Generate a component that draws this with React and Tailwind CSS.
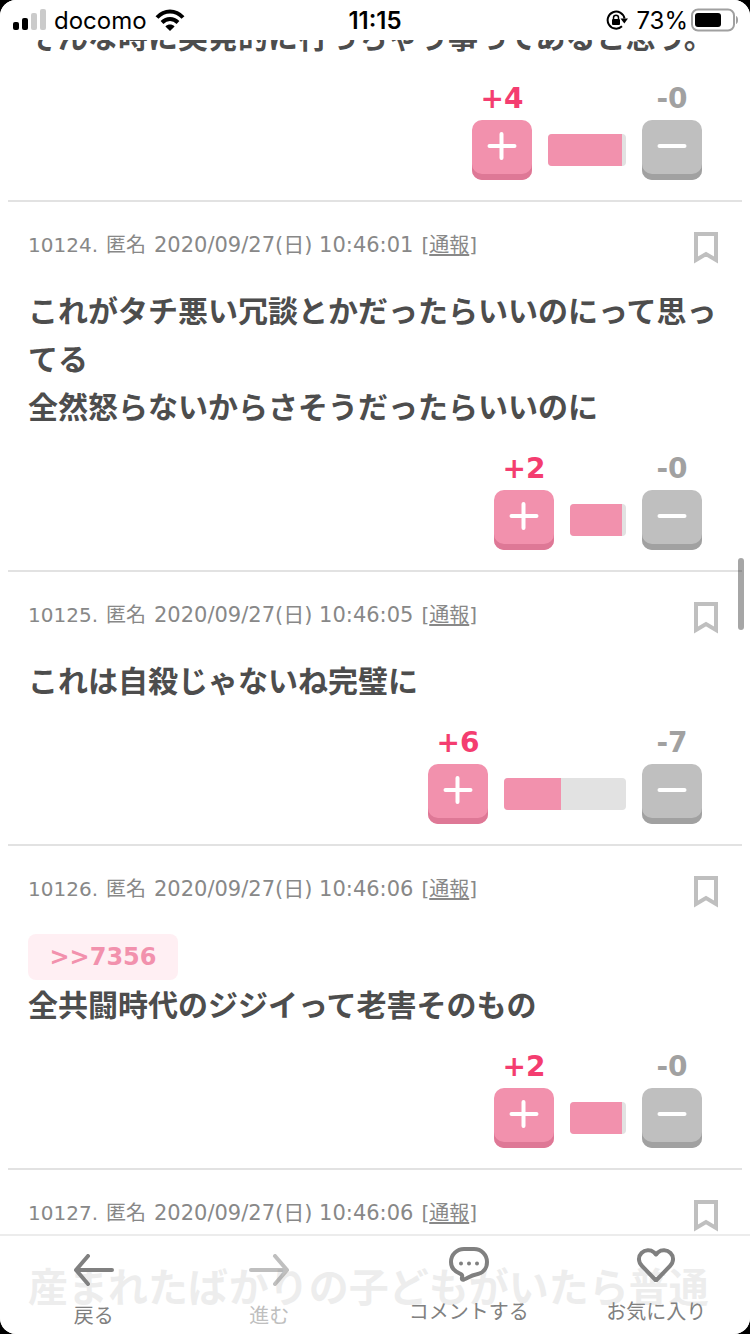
import React from 'react';
import clsx from 'clsx';

const posts = [
  {
    id: 10123,
    lines: ['そんな時に突発的に行っちゃう事ってあると思う。'],
    plus: 4,
    minus: 0,
    fill: 74,
    total: 78,
    continued: true,
  },
  {
    id: 10124,
    time: '10:46:01',
    lines: ['これがタチ悪い冗談とかだったらいいのにって思ってる', '全然怒らないからさそうだったらいいのに'],
    plus: 2,
    minus: 0,
    fill: 52,
    total: 56,
  },
  {
    id: 10125,
    time: '10:46:05',
    lines: ['これは自殺じゃないね完璧に'],
    plus: 6,
    minus: 7,
    fill: 57,
    total: 122,
  },
  {
    id: 10126,
    time: '10:46:06',
    replyTo: '7356',
    lines: ['全共闘時代のジジイって老害そのもの'],
    plus: 2,
    minus: 0,
    fill: 52,
    total: 56,
  },
  {
    id: 10127,
    time: '10:46:06',
    lines: ['産まれたばかりの子どもがいたら普通'],
    large: true,
  },
];

function StatusBar() {
  return (
    <header className="absolute inset-x-0 top-0 z-10 grid h-10 grid-cols-3 items-center bg-white px-3 pt-0.5 font-['Inter',sans-serif] text-2xl text-black">
      <div className="flex items-center gap-2">
        <svg className="mb-1" width="34" height="22" viewBox="0 0 34 22" aria-hidden="true">
          <rect x="1" y="14" width="6" height="8" rx="2" />
          <rect x="10" y="10" width="6" height="12" rx="2" />
          <rect x="19" y="5" width="6" height="17" rx="2" fill="#cbcbcb" />
          <rect x="28" y="1" width="6" height="21" rx="2" fill="#cbcbcb" />
        </svg>
        <span>docomo</span>
        <svg className="mb-0.5" width="30" height="22" viewBox="0 0 30 22" fill="none" stroke="#000" strokeWidth="4" aria-hidden="true">
          <path d="M2 8.5C9.500 .4 20.500 .4 28 8.500" />
          <path d="M7 13.500c4.800-4.600 11.200-4.600 16 0" />
          <path d="M15 22l-4.600-4.600c2.600-2.400 6.600-2.400 9.200 0z" fill="#000" stroke="none" />
        </svg>
      </div>
      <span className="text-center font-semibold">11:15</span>
      <div className="flex items-center justify-end">
        <svg className="mr-2 mb-0.5 shrink-0" width="22" height="22" viewBox="0 0 22 22" fill="none" stroke="#000" strokeWidth="2" aria-hidden="true">
          <path d="M18.500 9.500A8.500 8.500 0 1 0 16 17.300" />
          <path d="M14.500 9.500h7.500l-3.700 5z" fill="#000" stroke="none" />
          <path d="M7.500 10V8.700a2.500 2.500 0 0 1 5 0V10" strokeWidth="1.500" />
          <rect x="6" y="10" width="8" height="6" rx="1" fill="#000" stroke="none" />
        </svg>
        <span className="mr-0.5">73%</span>
        <svg className="mb-0.5 shrink-0" width="48" height="24" viewBox="0 0 48 24" aria-hidden="true">
          <rect x="2" y="1.500" width="42" height="21" rx="6" fill="none" stroke="#a0a0a0" strokeWidth="2" />
          <rect x="5" y="5" width="26" height="14" rx="3" />
          <path d="M46 8v8c1.500-.6 2-2 2-4s-.5-3.400-2-4z" fill="#a0a0a0" />
        </svg>
      </div>
    </header>
  );
}

function PostHeader({ id, time }) {
  return (
    <div className="mb-6 flex h-8 items-center justify-between pr-1">
      <div className="flex items-baseline gap-2 pb-1.5 text-xl leading-6 text-[#888]">
        <span>{id}.</span>
        <span>匿名</span>
        <time className="text-[21px]">2020/09/27(日) {time}</time>
        <span>
          [<a href="#report" className="underline underline-offset-2">通報</a>]
        </span>
      </div>
      <button type="button" aria-label="ブックマーク">
        <svg width="24" height="32" viewBox="0 0 24 32" fill="none" stroke="#bfbfbf" strokeWidth="4">
          <path d="M2 2h20v26l-10-6-10 6z" />
        </svg>
      </button>
    </div>
  );
}

function Votes({ plus, minus, fill, total }) {
  return (
    <div className="mt-[21px] flex items-end justify-end gap-4 pr-5">
      <div className="flex flex-col items-center gap-[5px]">
        <span className="text-[28px] leading-8 font-bold text-[#f43d70]">+{plus}</span>
        <button
          type="button"
          aria-label="プラス"
          className="flex h-15 w-15 items-center justify-center rounded-[10px] bg-[#f291ad] pb-2 shadow-[inset_0_-6px_0_#de7896]"
        >
          <svg width="30" height="30" viewBox="0 0 30 30" stroke="#fff" strokeWidth="4" strokeLinecap="round">
            <path d="M2.500 15h25M14.500 3v24" />
          </svg>
        </button>
      </div>
      <div className="mb-3.5 h-8 overflow-hidden rounded-sm bg-[#e2e2e2]" style={{ width: total }}>
        <div className="h-full bg-[#f291ad]" style={{ width: fill }} />
      </div>
      <div className="flex flex-col items-center gap-[5px]">
        <span className="text-[28px] leading-8 font-bold text-[#a1a1a1]">-{minus}</span>
        <button
          type="button"
          aria-label="マイナス"
          className="flex h-15 w-15 items-center justify-center rounded-[10px] bg-[#bfbfbf] pb-2 shadow-[inset_0_-6px_0_#a1a1a1]"
        >
          <svg width="30" height="30" viewBox="0 0 30 30" stroke="#fff" strokeWidth="4" strokeLinecap="round">
            <path d="M2.500 15h25" />
          </svg>
        </button>
      </div>
    </div>
  );
}

function Post({ post }) {
  return (
    <article className={clsx('flex flex-col border-b-2 border-[#e2e2e2] px-5 pb-5', !post.continued && 'pt-[30px]')}>
      {!post.continued && <PostHeader id={post.id} time={post.time} />}
      {post.replyTo && (
        <a
          href="#reply"
          className="my-0.5 min-w-[150px] self-start rounded-lg bg-[#ffeff3] px-5 text-center text-2xl leading-[46px] font-bold text-[#f291ad]"
        >
          &gt;&gt;{post.replyTo}
        </a>
      )}
      <div className={clsx('font-bold text-[#4d4d4d]', post.large ? 'text-[40px] leading-[64px]' : 'text-[30px] leading-[48px]')}>
        {post.lines.map((line) => (
          <p key={line} className="break-all">{line}</p>
        ))}
      </div>
      {post.plus !== undefined && <Votes {...post} />}
    </article>
  );
}

function BottomNav() {
  return (
    <nav className="absolute inset-x-0 bottom-0 z-10 grid h-[100px] grid-cols-4 border-t-2 border-[#ececec] bg-white/90 text-xl leading-6 text-[#808080]">
      <button type="button" className="flex flex-col items-center gap-[18px] pt-[18px]">
        <svg width="40" height="32" viewBox="0 0 40 32" fill="none" stroke="currentColor" strokeWidth="4" strokeLinecap="round" strokeLinejoin="round">
          <path d="M38 16H2M14 2L2 16l12 14" />
        </svg>
        <span>戻る</span>
      </button>
      <button type="button" disabled className="flex flex-col items-center gap-[18px] pt-[18px] pr-6 opacity-50">
        <svg width="40" height="32" viewBox="0 0 40 32" fill="none" stroke="currentColor" strokeWidth="4" strokeLinecap="round" strokeLinejoin="round">
          <path d="M2 16h36M26 2l12 14-12 14" />
        </svg>
        <span>進む</span>
      </button>
      <button type="button" className="flex flex-col items-center gap-[18px] pt-2.5">
        <svg width="40" height="36" viewBox="0 0 40 36" fill="none" stroke="currentColor" strokeWidth="4" strokeLinejoin="round">
          <path d="M15 3h10c7.500 0 13 6 13 13 0 7-4.500 11.500-11 12.500-5 .8-8 3.500-12 5-1.800 .6-2.400-.4-2-2 .6-2 0-3-1.600-3.700C5.500 25.500 2 21.500 2 16 2 8.500 8 3 15 3z" />
          <g fill="currentColor" stroke="none">
            <circle cx="12" cy="17.500" r="2" />
            <circle cx="20" cy="17.500" r="2" />
            <circle cx="28" cy="17.500" r="2" />
          </g>
        </svg>
        <span>コメントする</span>
      </button>
      <button type="button" className="flex flex-col items-center gap-[18px] pt-2.5">
        <svg width="40" height="36" viewBox="0 0 40 36" fill="none" stroke="currentColor" strokeWidth="4" strokeLinejoin="round">
          <path d="M20 34.500L6 20C2 16 2 10.500 5.500 7 9 3.500 14.500 3.500 17.800 6.200L20 8.500l2.200-2.300C25.500 3.500 31 3.500 34.500 7c3.500 3.500 3.500 9-.5 13z" />
        </svg>
        <span>お気に入り</span>
      </button>
    </nav>
  );
}

export default function App() {
  return (
    <div className="h-screen bg-black font-['DejaVu_Sans','Noto_Sans_CJK_JP',sans-serif]" lang="ja">
      <div className="relative h-full overflow-hidden rounded-2xl bg-white">
        <StatusBar />
        <main className="px-2 pt-3.5">
          {posts.map((post) => (
            <Post key={post.id} post={post} />
          ))}
        </main>
        {/* scroll indicator */}
        <div className="absolute top-[558px] right-1.5 h-[72px] w-1.5 rounded-full bg-black/35" />
        <BottomNav />
      </div>
    </div>
  );
}
